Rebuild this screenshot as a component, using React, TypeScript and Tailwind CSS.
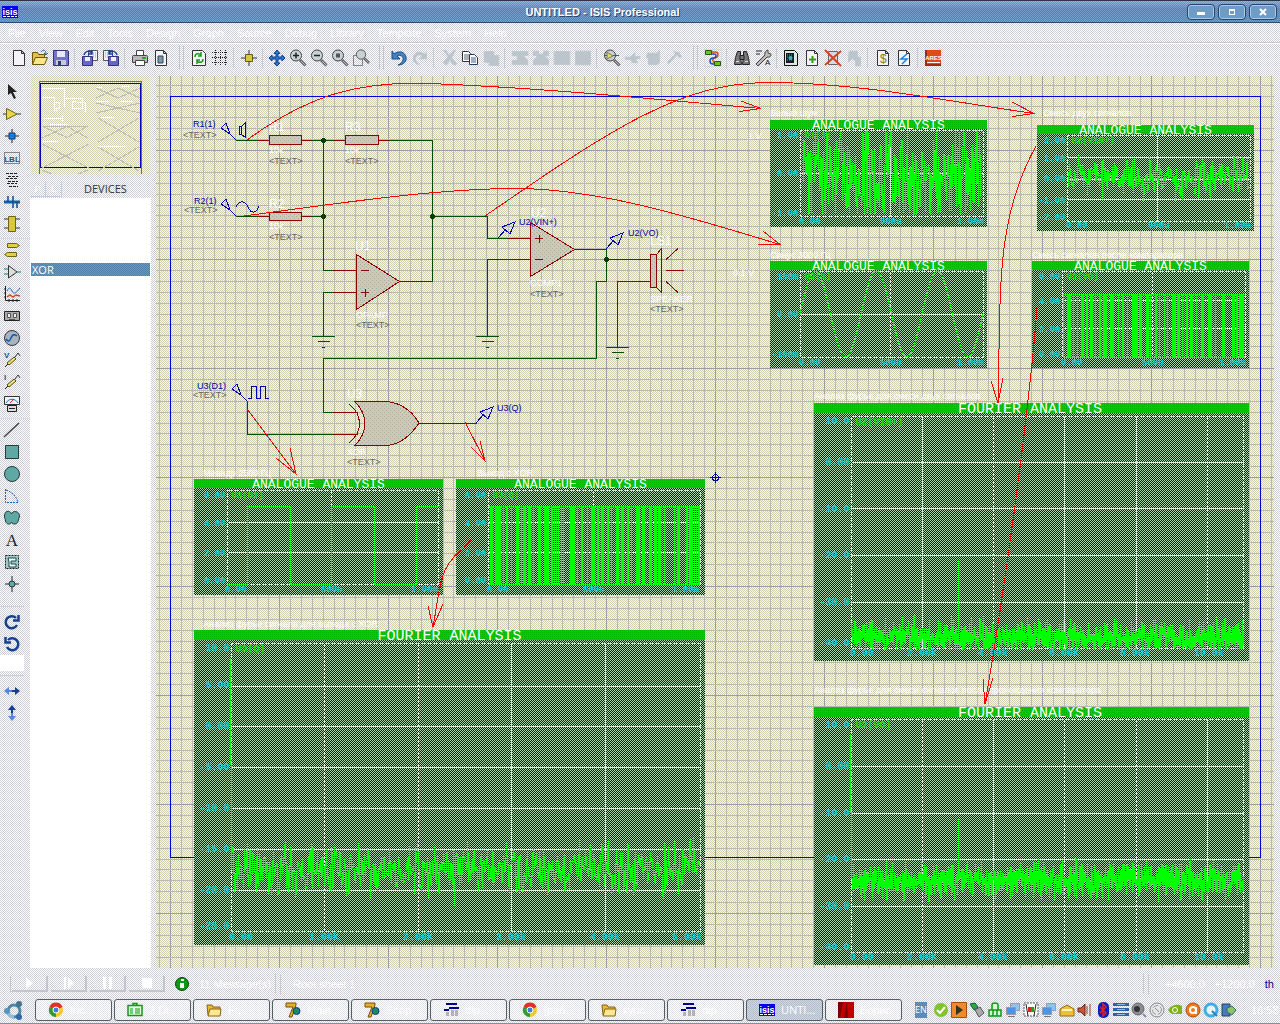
import React from "react";

const PANEL = "bg-[conic-gradient(#ffffff_25%,#cccdd6_0_50%,#ffffff_0_75%,#cccdd6_0)] bg-[size:2px_2px]";
const STEEL = "bg-[conic-gradient(#6699bb_25%,#5580aa_0_50%,#6699bb_0_75%,#4f7fb4_0)] bg-[size:2px_2px]";

/* ---------- toolbar icons, drawn on an 18x18 grid ---------- */

const page = (
  <path d="M3.5 1.5h8l3 3v12h-11z M11.500 1.500v3h3" fill="#f4f4f8" stroke="#333" />
);
const floppy = (
  <g>
    <path d="M1.500 1.500h14l1 1v14h-15z" fill="#7274c8" stroke="#33337a" />
    <path d="M5 2h8v6H5z" fill="#e8e8f4" />
    <path d="M4 11h10v5H4z" fill="#c8c8dc" />
    <path d="M6 12h3v4H6z" fill="#33337a" />
  </g>
);
const lens = (inner: React.ReactNode) => (
  <g>
    <path d="M11 11l5.500 5.500" stroke="#666" strokeWidth="3" />
    <path d="M12 12l4 4" stroke="#bbb" />
    <circle cx="7" cy="6.500" r="5.500" fill="#c9d2d2" stroke="#444" />
    {inner}
  </g>
);
const saveArrow = (
  <g>
    <path d="M7.500 1.500h9v10h-9z" fill="#f2f2f8" stroke="#555" />
    <path d="M12 4h3M12 6h3M12 8h3" stroke="#c88" strokeDasharray="1 1" />
    <path d="M1.500 7.500h10v9h-10z" fill="#6668c0" stroke="#33337a" />
    <path d="M4 8h5v4H4z" fill="#eef" />
    <path d="M3 6C4 2 8 1 11 4M11 1v4H7" fill="none" stroke="#12409a" strokeWidth="1.500" />
  </g>
);
const ghost = (d: string) => <path d={d} fill="#bcc4cc" stroke="#ccd8dc" strokeDasharray="1 1" />;

const glyphs: Record<string, React.ReactNode> = {
  New: page,
  Open: (
    <g>
      <path d="M1.500 15.500v-12h5l1 2h6v3" fill="#e3c04a" stroke="#6b5510" />
      <path d="M1.500 15.500l3-7h12l-3 7z" fill="#fbe789" stroke="#6b5510" />
      <path d="M10 3c2-3 5-2 5 2M13 4l2 2 2-2" fill="none" stroke="#2a5a8a" />
    </g>
  ),
  Save: floppy,
  "Import section": saveArrow,
  "Export section": <g transform="translate(18 0) scale(-1 1)">{saveArrow}</g>,
  Print: (
    <g>
      <path d="M5.500 7V1.500h7V7" fill="#fff" stroke="#444" />
      <path d="M1.500 7.500q0-1 1-1h13q1 0 1 1v6h-15z" fill="#b8b8b8" stroke="#444" />
      <path d="M4.500 11.500h9v5h-9z" fill="#fff" stroke="#444" />
      <path d="M11 8h4v2h-4z" fill="#1db21d" />
    </g>
  ),
  "Mark output area": (
    <g>
      {page}
      <path d="M6 7h5v7H6z" fill="#7c99a8" stroke="#345" />
    </g>
  ),
  Redraw: (
    <g>
      <path d="M2.500 1.500h10l3 3v12h-13z" fill="#f4f4f8" stroke="#333" />
      <path d="M5 8c0-4 4-4 6-2M11 3v4H8M13 10c0 4-4 4-6 2M7 15v-4h3" fill="none" stroke="#1b9a1b" strokeWidth="1.500" />
    </g>
  ),
  "Toggle grid": (
    <path
      d="M1 3.500h16M1 8.500h16M1 13.500h16M4.500 1v16M9.500 1v16M14.500 1v16"
      stroke="#222"
      strokeDasharray="1 1"
      shapeRendering="crispEdges"
    />
  ),
  Origin: (
    <g>
      <path d="M9 1v16M1 9h16" stroke="#333" />
      <path d="M5.500 5.500h7v7h-7z" fill="#d8c840" stroke="#665c10" />
    </g>
  ),
  Pan: (
    <path
      d="M9 1l3 3.500h-2V8h4V6l3 3-3 3v-2h-4v4h2L9 17l-3-3h2v-4H4v2L1 9l3-3v2h4V4.500H6z"
      fill="#2a7ad8"
      stroke="#0c3f8c"
    />
  ),
  "Zoom in": lens(<path d="M4 6.500h6M7 3.500v6" stroke="#222" strokeWidth="1.500" />),
  "Zoom out": lens(<path d="M4 6.500h6" stroke="#222" strokeWidth="1.500" />),
  "Zoom all": lens(<path d="M5 4.500h4v4H5z" fill="#555" />),
  "Zoom area": (
    <g>
      <path d="M1.500 6.500h9v10h-9z" fill="none" stroke="#222" strokeDasharray="1 1" />
      <g transform="translate(3 0) scale(.85)">{lens(null)}</g>
    </g>
  ),
  Undo: (
    <path d="M2 2v8h8L7 7c4-2 7 1 6 4-.5 2-2 4-5 5 6 0 9-4 8-8-1-5-7-7-12-3z" fill="#3f83c4" stroke="#1d4c85" />
  ),
  Redo: <g transform="translate(18 0) scale(-1 1)">{ghost("M2 2v8h8L7 7c4-2 7 1 6 4-.5 2-2 4-5 5 6 0 9-4 8-8-1-5-7-7-12-3z")}</g>,
  Cut: ghost("M3 1l5 7-5 5q2 5 5 2l2-4 2 4q4 3 5-1l-5-5 4-8h-2L9 6 6 1z"),
  Copy: (
    <g>
      <path d="M1.500 2.500h6l2 2v8h-8z" fill="#fff" stroke="#333" />
      <path d="M3 6h5M3 8h5M3 10h5" stroke="#567" />
      <path d="M8.500 5.500h5l3 3v7h-8z" fill="#fff" stroke="#223a66" />
      <path d="M10 9h5M10 11h5M10 13h5" stroke="#369" />
    </g>
  ),
  Paste: ghost("M2 2h10v4h5v11H7v-3H2z"),
  "Block copy": ghost("M1 2h16v5h-4l4 4v5H1v-5h5V7H1z"),
  "Block move": ghost("M1 2h6v3h4V2h6v5h-4l4 4v5H1v-4l4-5H1z"),
  "Block rotate": ghost("M1 2h16v14H1z"),
  "Block delete": ghost("M1 2h16v14H1z"),
  "Pick device": lens(
    <g>
      <path d="M4 3l6 4-6 3z" fill="#e8dc58" stroke="#776" />
      <path d="M1 6.500h3M10 6.500h6" stroke="#367" />
    </g>,
  ),
  "Make device": ghost("M1 8h5l5-5v4h5v3h-4l2 4H8l-1-3H1z"),
  "Packaging tool": ghost("M2 4h10l3-3v12l-3 3H3V9H1z"),
  Decompose: ghost("M7 2l6 1 3 5-3 1-2-3-8 9-2-2 8-8z"),
  "Wire autorouter": (
    <g fill="none">
      <path d="M.5 .5h17v17H.5z" stroke="#ccc" strokeDasharray="1 1" />
      <path d="M7 3h4q3 0 3 2.500T11 9t-2 3 3 3" stroke="#e24912" strokeWidth="1.500" />
      <path d="M7 5h3q2 0 2 2T9 9t-3 3 3 3h3" stroke="#1756c4" strokeWidth="1.500" />
      <path d="M1.500 1.500h6v4h-6zM10.500 12.500h6v4h-6z" fill="#69c21e" stroke="#2a5a0a" />
    </g>
  ),
  Search: (
    <g fill="#777" stroke="#222">
      <path d="M4.500 2.500h3v5l1 8h-7l1-7zM10.500 2.500h3l2 6 1 7h-7l1-8z" />
      <path d="M7 6.500h4v4H7z" />
      <path d="M3 12.500h3M12 12.500h3" stroke="#ddd" />
    </g>
  ),
  "Property tool": (
    <g>
      <path d="M2 2h6M2 5h4" stroke="#222" />
      <path d="M2 15l9-9q-1-4 3-5v3l3 1q0 4-4 3l-9 9z" fill="#bbb" stroke="#444" />
      <text x="11" y="16" className="font-['Liberation_Sans'] text-[8px]" fill="#111">A</text>
    </g>
  ),
  "Design explorer": (
    <g>
      <path d="M2.500 1.500h10l3 3v12h-13z" fill="#dfe9e4" stroke="#111" />
      <path d="M4 4h8v10H4z" fill="#122" />
      <path d="M5 6h6M5 8h6M5 11h6" stroke="#3b3" strokeDasharray="1 1" />
      <circle cx="8.500" cy="9" r="2" fill="#3bc" />
    </g>
  ),
  "New sheet": (
    <g>
      {page}
      <path d="M6 10.500h7M9.500 7v7" stroke="#3a9a14" strokeWidth="2" />
    </g>
  ),
  "Remove sheet": (
    <g>
      <path d="M4.500 2.500h9v13h-9z" fill="#cde" stroke="#666" />
      <path d="M1 1l16 16M17 2L1 16" stroke="#d8421c" strokeWidth="2" />
    </g>
  ),
  "Exit to parent": ghost("M4 2h9v6h3v9h-6v-5l-3-2-4 4V8z"),
  "Bill of materials": (
    <g>
      {page}
      <text x="6" y="14" className="font-['Liberation_Sans'] text-[12px]" fill="#888000">$</text>
    </g>
  ),
  "Electrical check": (
    <g>
      {page}
      <path d="M12 5L6 10h6l-5 5" fill="none" stroke="#1c82e0" strokeWidth="1.500" />
    </g>
  ),
  ARES: (
    <g>
      <path d="M1 1h16v16H1z" fill="#e04a18" />
      <path d="M1 15h16v2H1zM1 1h2v16H1z" fill="#a82808" />
      <path d="M3 13.500h13" stroke="#fff" />
      <text x="9.500" y="11" textAnchor="middle" className="font-['Liberation_Sans'] text-[6px] font-bold" fill="#fff">ARES</text>
    </g>
  ),

  /* mode column */
  Selection: <path d="M5 1v11l3-2 3 6 2-1-3-6h4z" fill="#222" />,
  Component: (
    <g>
      <path d="M0 9h4M14 9h4" stroke="#333" />
      <path d="M3.500 3.500L14 9 3.500 14.500z" fill="#e6d64a" stroke="#6b6414" />
    </g>
  ),
  Junction: (
    <g>
      <path d="M9 2v14M2 9h14" stroke="#223" />
      <path d="M6 6h6v6H6z" fill="#1a7bd8" stroke="#0a3c78" />
    </g>
  ),
  "Wire label": (
    <g>
      <path d="M1.500 3.500h15v11h-15z" fill="none" stroke="#222" strokeDasharray="1 1" />
      <text x="9" y="13" textAnchor="middle" className="font-['Liberation_Sans'] text-[8px] font-bold" fill="#0a5a9c">LBL</text>
    </g>
  ),
  "Text script": (
    <path
      d="M3 2.500h12M5 5.500h10M3 7.500h12M5 10.500h10M4 12.500h10M6 15.500h9"
      stroke="#222"
      strokeDasharray="3 1"
      shapeRendering="crispEdges"
    />
  ),
  Bus: (
    <g>
      <path d="M1 9h16" stroke="#0d62b0" strokeWidth="3" />
      <path d="M5 3v6M10 3v12M14 9v6" stroke="#0d4c88" strokeWidth="1.500" />
    </g>
  ),
  Subcircuit: (
    <g>
      <path d="M1 4h16M1 13h16" stroke="#333" />
      <path d="M5.500 1.500h7v15h-7z" fill="#d8c63c" stroke="#6b6414" />
    </g>
  ),
  Terminal: (
    <path d="M4.500 2.500h9l3 2-3 2h-9zM13.500 11.500h-9l-3 2 3 2h9z" fill="#e0d044" stroke="#6b6414" />
  ),
  "Device pin": (
    <g>
      <path d="M1 6h4M1 11h4M14 9h4" stroke="#087" />
      <path d="M5.500 2.500L14 9l-8.500 6z" fill="#ddd" stroke="#333" />
    </g>
  ),
  Graph: (
    <g fill="none">
      <path d="M2.500 1v14.500H17M1 4h2M1 8h2M1 12h2M6 14v3M10 14v3M14 14v3" stroke="#222" />
      <path d="M4 6c2-4 3-4 5 0s4 2 8-3" stroke="#1c6cc0" />
      <path d="M4 12l3-2 3 2 3-2 4 1" stroke="#d42" strokeWidth="1.500" />
    </g>
  ),
  Tape: (
    <g>
      <path d="M1.500 4.500h15v9h-15z" fill="#aaa" stroke="#222" />
      <path d="M4.500 6.500h3v4h-3zM10.500 6.500h3v4h-3z" fill="#eee" stroke="#555" />
      <path d="M6 12.500h6" stroke="#555" />
    </g>
  ),
  Generator: (
    <g>
      <circle cx="9" cy="9" r="7.500" fill="#a8b4bc" stroke="#334" />
      <path d="M3 10c3 4 4 1 5-1s2-5 6-2" fill="none" stroke="#0c54b0" strokeWidth="1.500" />
    </g>
  ),
  "Voltage probe": (
    <g>
      <text x="1" y="7" className="font-['Liberation_Sans'] text-[8px] font-bold" fill="#0a5a9c">V</text>
      <path d="M2 16l3-3M12 6l3-4 2 3" fill="none" stroke="#333" />
      <path d="M4 12l7-6 2 2-7 6z" fill="#ece07a" stroke="#554f10" />
    </g>
  ),
  "Current probe": (
    <g>
      <text x="1" y="7" className="font-['Liberation_Sans'] text-[8px] font-bold" fill="#0a5a9c">I</text>
      <path d="M2 16l3-3M12 6l3-4 2 3" fill="none" stroke="#333" />
      <path d="M4 12l7-6 2 2-7 6z" fill="#ece07a" stroke="#554f10" />
    </g>
  ),
  Instruments: (
    <g>
      <path d="M1.500 1.500h15v8h-15z" fill="#eef4f8" stroke="#333" />
      <path d="M3 8c3-5 9-5 12 0" fill="none" stroke="#1c6cc0" />
      <path d="M7 8l4-4" stroke="#d22" />
      <path d="M4.500 10.500h9v6h-9z" fill="#ddd" stroke="#222" />
      <path d="M6 13.500h6" stroke="#222" />
    </g>
  ),
  Line: <path d="M1 16L16 2" stroke="#444" strokeWidth="1.500" />,
  Box: <path d="M2.500 2.500h13v13h-13z" fill="#5fa8a4" stroke="#243c3c" />,
  Circle: <circle cx="9" cy="9" r="7.500" fill="#5fa8a4" stroke="#243c3c" />,
  Arc: (
    <path d="M2.500 2v13.500H16M3 3c6 2 10 6 12 12" fill="none" stroke="#1668b8" strokeDasharray="2 1" />
  ),
  Path: (
    <path d="M8.500 5c-1-4-7-4-7 2 0 3 1 3 1 5 1 4 5 4 6 1 1 3 6 3 7-2 0-2 1-2 1-4 0-5-7-6-8-2z" fill="#5fa8a4" stroke="#243c3c" />
  ),
  Text: (
    <text x="9" y="15" textAnchor="middle" className="font-['Liberation_Serif'] text-[17px]" fill="#222">A</text>
  ),
  Symbol: (
    <g>
      <path d="M2.500 2.500h13v13h-13z" fill="#9cc8c8" stroke="#222" strokeDasharray="2 1" />
      <path d="M5 5h8v3H8v3h5v3H6V9z" fill="#e8ffff" stroke="#244" />
    </g>
  ),
  Marker: (
    <g>
      <path d="M9 1v16M2 9h14" stroke="#223" />
      <circle cx="9" cy="9" r="3" fill="#5fa8a4" stroke="#243c3c" />
    </g>
  ),
  "Rotate clockwise": (
    <path d="M13 5a6 6 0 1 0 1 7M15.500 2v5.500H10" fill="none" stroke="#153f92" strokeWidth="2.500" />
  ),
  "Rotate anticlockwise": (
    <path d="M5 5a6 6 0 1 1-1 7M2.500 2v5.500H8" fill="none" stroke="#153f92" strokeWidth="2.500" />
  ),
  "Mirror horizontally": (
    <g>
      <path d="M9 8H6V5L1 9l5 4v-3h3z" fill="#5588dd" />
      <path d="M9 8h3V5l5 4-5 4v-3H9z" fill="#153f92" />
    </g>
  ),
  "Mirror vertically": (
    <g>
      <path d="M8 9V6H5l4-5 4 5h-3v3z" fill="#153f92" />
      <path d="M8 9v3H5l4 5 4-5h-3V9z" fill="#5588dd" />
    </g>
  ),
};

function Icon({ name }: { name: string }) {
  return (
    <svg width="18" height="18" viewBox="0 0 18 18" fill="none" aria-hidden="true">
      {glyphs[name]}
    </svg>
  );
}

const toolbar: string[][] = [
  ["New", "Open", "Save"],
  ["Import section", "Export section"],
  ["Print", "Mark output area"],
  ["Redraw", "Toggle grid"],
  ["Origin"],
  ["Pan", "Zoom in", "Zoom out", "Zoom all", "Zoom area"],
  ["Undo", "Redo"],
  ["Cut", "Copy", "Paste"],
  ["Block copy", "Block move", "Block rotate", "Block delete"],
  ["Pick device", "Make device", "Packaging tool", "Decompose"],
  ["Wire autorouter"],
  ["Search", "Property tool"],
  ["Design explorer", "New sheet", "Remove sheet", "Exit to parent"],
  ["Bill of materials", "Electrical check"],
  ["ARES"],
];
const barStarts = [3, 6, 10];

function IsisLogo() {
  return (
    <svg width="16" height="12" viewBox="0 0 16 12" className="shrink-0" role="img" aria-label="ISIS">
      <path d="M0 0h16v12H0z" fill="#0000ee" />
      <text x="8" y="9" textAnchor="middle" className="font-['Liberation_Sans'] text-[9px] font-bold" fill="#fff">isis</text>
      <path d="M1 10.500h14" stroke="#fff" strokeDasharray="3 1" />
    </svg>
  );
}

function TitleBar() {
  const btn =
    "flex h-4 w-7 items-center justify-center rounded-sm border border-[#23456e] bg-[#6f9cc6] shadow-[inset_0_0_0_1px_#a9cbe8]";
  return (
    <header className="flex h-[23px] items-center border-t border-b border-t-[#333344] border-b-[#2c4a6c] bg-[conic-gradient(#ffffff22_25%,#00224422_0_50%,#ffffff22_0_75%,#00224422_0),linear-gradient(#85add9,#6688bb_40%,#5b96c6)] bg-[size:2px_2px,auto] pr-[3px] pl-0.5">
      <IsisLogo />
      <h1 className="flex-1 text-center text-[11px] leading-4 font-bold text-white [text-shadow:1px_1px_0_#24466f]">
        UNTITLED - ISIS Professional
      </h1>
      <div className="flex gap-[3px]">
        <button aria-label="Minimize" className={btn}>
          <span className="mt-1 h-[3px] w-2 bg-white" />
        </button>
        <button aria-label="Maximize" className={btn}>
          <span className="h-1.5 w-1.5 border border-t-2 border-white" />
        </button>
        <button aria-label="Close" className={btn}>
          <svg width="8" height="8" viewBox="0 0 8 8">
            <path d="M1 1l6 6M7 1L1 7" stroke="#fff" strokeWidth="2" />
          </svg>
        </button>
      </div>
    </header>
  );
}

const menus = ["File", "View", "Edit", "Tools", "Design", "Graph", "Source", "Debug", "Library", "Template", "System", "Help"];

function MenuBar() {
  return (
    <nav className="flex h-5 items-center gap-[13px] border-b border-[#c9c9c9] pl-2">
      {menus.map((m) => (
        <button key={m} className="text-[11px] leading-4 text-white">
          {m}
        </button>
      ))}
    </nav>
  );
}

function Toolbar() {
  return (
    <div className="flex h-[33px] items-center border-t border-white pb-1 pl-2" role="toolbar" aria-label="Commands">
      {toolbar.map((group, i) => (
        <React.Fragment key={i}>
          {i > 0 &&
            (barStarts.includes(i) ? (
              <span className="mr-1 ml-2 h-6 w-[5px] border-x border-[#c4c6ce]" />
            ) : (
              <span className={i === 5 || i === 12 ? "mx-[3px] h-5 w-px bg-[#c8cad2]" : "mr-1 ml-[3px] h-5 w-px bg-[#c8cad2]"} />
            ))}
          {group.map((n) => (
            <button key={n} aria-label={n} className="flex w-[21px] justify-center">
              <Icon name={n} />
            </button>
          ))}
        </React.Fragment>
      ))}
    </div>
  );
}

const modes: string[][] = [
  ["Selection", "Component", "Junction", "Wire label", "Text script", "Bus", "Subcircuit"],
  ["Terminal", "Device pin", "Graph", "Tape", "Generator", "Voltage probe", "Current probe", "Instruments"],
  ["Line", "Box", "Circle", "Arc", "Path", "Text", "Symbol", "Marker"],
];

function ModeColumn() {
  const b = "flex h-[22px] w-6 items-center justify-center";
  return (
    <div className="flex w-[30px] shrink-0 flex-col gap-[3px] pt-[5px]" role="toolbar" aria-label="Modes" aria-orientation="vertical">
      {modes.map((g, i) => (
        <div key={i} className={i ? "flex flex-col border-t border-[#d8d8f4]" : "flex flex-col"}>
          {g.map((n) => (
            <button key={n} aria-label={n} className={b}>
              <Icon name={n} />
            </button>
          ))}
        </div>
      ))}
      <div className="mt-2 flex w-6 flex-col border-t border-[#cfcfe8] pt-1">
        <button aria-label="Rotate clockwise" className={b}><Icon name="Rotate clockwise" /></button>
        <button aria-label="Rotate anticlockwise" className={b}><Icon name="Rotate anticlockwise" /></button>
        <input aria-label="Angle" className="h-4 w-6 bg-white" />
        <span className="my-1 h-px bg-[#cccccc]" />
        <button aria-label="Mirror horizontally" className={b}><Icon name="Mirror horizontally" /></button>
        <button aria-label="Mirror vertically" className={b}><Icon name="Mirror vertically" /></button>
      </div>
    </div>
  );
}

/* ---------- dithered fills shared by the drawings ---------- */

function Fills() {
  return (
    <defs>
      <pattern id="paper" width="4" height="4" patternUnits="userSpaceOnUse">
        <path d="M0 0h4v4H0z" fill="#fbfbdc" />
        <path d="M0 0h1v1H0zM2 2h1v1H2zM1 1h1v1H1zM3 3h1v1H3z" fill="#d2d29c" />
        <path d="M2 0h1v1H2zM0 2h1v1H0zM3 1h1v1H3zM1 3h1v1H1z" fill="#cccccc" />
      </pattern>
      <pattern id="board" width="2" height="2" patternUnits="userSpaceOnUse">
        <path d="M0 0h2v2H0z" fill="#003000" />
        <path d="M0 0h1v1H0zM1 1h1v1H1z" fill="#aed0ae" />
      </pattern>
      <pattern id="banner" width="2" height="2" patternUnits="userSpaceOnUse">
        <path d="M0 0h2v2H0z" fill="#00cc00" />
        <path d="M0 0h1v1H0z" fill="#00b400" />
      </pattern>
      <pattern id="body" width="4" height="4" patternUnits="userSpaceOnUse">
        <path d="M0 0h4v4H0z" fill="#cccab4" />
        <path d="M0 0h1v1H0zM2 2h1v1H2z" fill="#aaa8aa" />
      </pattern>
    </defs>
  );
}

function Overview() {
  return (
    <svg className="h-[98px] w-full" viewBox="30 76 121 98" shapeRendering="crispEdges" fill="none" role="img" aria-label="Sheet overview">
      <path d="M31 76h119v98H31z" fill="url(#paper)" />
      <path d="M39.500 174V81.500h102V174" stroke="#00b400" />
      <path d="M40.500 83.500h100v84h-100z" stroke="#0000c0" />
      <g stroke="#bdbdb6">
        <path d="M96 88l22 10M96 98l22-10M118 88l22 10M118 98l22-10M96 103l44 10M96 113l44-10M42 126h46M42 126l26 12M42 138l26-12M66 126l22 12M66 138l22-12M42 144l47 24M42 168l47-24M98 118l41 24M98 142l41-24M98 147l41 24M98 171l41-24M42 170l10 4M88 170l-10 4" />
      </g>
      <path
        d="M42 88h22v20M42 97h12v13h4M54 102h5v6h-5zM66 98h16v10H72v-7h4M77 102h8v10M43 118h18M62 115v7M50 124h18M43 141h15M96 87h6M122 86h8M97 101h12M120 101h13M100 117h14M98 146h28"
        stroke="#fff"
      />
    </svg>
  );
}

function Devices() {
  return (
    <aside className="flex w-[121px] shrink-0 flex-col">
      <Overview />
      <div className="flex h-[23px] items-end">
        <button aria-label="Pick devices" className="h-4 w-4 border-r border-b border-[#bcd0e0] text-[9px] leading-4 text-white">P</button>
        <button aria-label="Device library" className="h-4 w-4 border-r border-b border-[#bcd0e0] text-[9px] leading-4 text-white">L</button>
        <h2 className="flex-1 pl-[22px] font-['Open_Sans'] text-[11px] leading-4 text-[#333]">DEVICES</h2>
      </div>
      <ul className="mt-px flex-1 bg-white pt-[65px]" aria-label="Device list">
        <li className={"mx-px h-[13px] pl-px font-['Open_Sans'] text-[11px] leading-[13px] text-white " + STEEL}>XOR</li>
      </ul>
    </aside>
  );
}

/* ---------- schematic ---------- */

function random(seed: number) {
  let s = seed;
  return () => {
    s = (s * 1664525 + 1013904223) % 4294967296;
    return s / 4294967296;
  };
}

function noise(x0: number, x1: number, mid: number, amp: number, seed: number, step = 0.5, low = 9999, high = 0) {
  const r = random(seed);
  const pts: string[] = [];
  for (let x = x0; x <= x1; x += step) {
    const spread = (r() + r() + r() - 1.5) / 1.5;
    pts.push(x.toFixed(1) + "," + Math.max(high, Math.min(low, mid + spread * amp)).toFixed(1));
  }
  return pts.join(" ");
}

type Tick = [string, number];
type GraphProps = {
  x: number; y: number; w: number; h: number;
  title: string; trace: string; fourier?: boolean;
  left: number; right: number; top: number; bottom: number;
  vLines: number[]; hLines: number[]; yTicks: Tick[]; xTicks: Tick[];
  children: React.ReactNode;
};

function GraphBox(p: GraphProps) {
  const head = p.fourier ? 10 : 9;
  const title = p.fourier ? "font-['Liberation_Mono'] text-[15px]" : "font-['Liberation_Mono'] text-[13px]";
  const tick = p.fourier ? "font-['Liberation_Mono'] text-[10px] font-bold" : "font-['Liberation_Mono'] text-[9px] font-bold";
  const titleX = p.fourier && p.w < 440 ? p.x + 216 : p.x + p.w / 2;
  return (
    <g>
      <rect x={p.x} y={p.y} width={p.w} height={p.h} fill="url(#board)" />
      <rect x={p.x} y={p.y} width={p.w} height={head} fill="url(#banner)" />
      <text x={titleX} y={p.y + (p.fourier ? 10 : 9)} textAnchor="middle" className={title} fill="#fff">{p.title}</text>
      <g stroke="#e4e8e4">
        <rect x={p.left} y={p.top} width={p.right - p.left} height={p.bottom - p.top} strokeDasharray="2 1" />
        {p.vLines.map((v) => <path key={v} d={`M${v} ${p.top}V${p.bottom}`} strokeDasharray="3 1" />)}
        {p.hLines.map((v) => <path key={v} d={`M${p.left} ${v}H${p.right}`} />)}
      </g>
      <g fill="#00ced6" className={tick}>
        {p.yTicks.map(([t, v]) => <text key={t} x={p.left - 2} y={v + 3} textAnchor="end">{t}</text>)}
        {p.xTicks.map(([t, v]) => <text key={t} x={v} y={p.y + p.h - (p.fourier ? 5 : 3)}>{t}</text>)}
      </g>
      <text x={p.left + 4} y={p.top + (p.fourier ? 8 : 7)} className={tick} fill="#00e000">{p.trace}</text>
      <g stroke="#00ff00">{p.children}</g>
    </g>
  );
}

function bars(list: number[], origin: number, scale: number, top: number, bottom: number) {
  const out: React.ReactNode[] = [];
  for (let i = 0; i < list.length; i += 2) {
    const w = Math.max(1, Math.round(list[i + 1] / scale));
    out.push(
      <rect key={i} x={Math.round(origin + list[i] / scale)} y={top} width={w} height={bottom - top} fill="#00ff00" stroke="none" />,
    );
  }
  return out;
}

const comparatorBars = [
  937, 4, 950, 12, 966, 4, 980, 4, 990, 8, 1005, 5, 1015, 10, 1030, 4, 1042, 6, 1054, 12, 1074, 12, 1098, 4, 1110, 6, 1124, 4,
  1138, 16, 1160, 8, 1178, 8, 1192, 2, 1205, 6, 1216, 4, 1230, 4, 1240, 4, 1254, 12, 1270, 8, 1284, 2, 1296, 6, 1308, 10, 1324, 4,
  1340, 10, 1360, 12, 1380, 2, 1400, 10, 1430, 8, 1440, 6, 1450, 12, 1462, 2,
];
const xorBars = [
  150, 8, 166, 18, 190, 4, 198, 5, 212, 2, 228, 8, 243, 3, 250, 8, 264, 10, 280, 4, 293, 10, 312, 14, 333, 5, 341, 3, 348, 4, 355, 3,
  362, 2, 370, 2, 390, 16, 410, 4, 424, 5, 440, 4, 452, 12, 471, 6, 484, 10, 502, 6, 514, 2, 528, 10, 544, 8, 560, 6, 574, 2,
  587, 12, 606, 8, 628, 8, 642, 8, 655, 10, 672, 2, 702, 3, 712, 8, 738, 6, 746, 12, 762, 3, 768, 3, 775, 6,
];

function sine() {
  const pts: string[] = [];
  for (let x = 800; x <= 983; x++) pts.push(`${x},${(314 - 43 * Math.sin(((x - 800) / 61) * 2 * Math.PI)).toFixed(1)}`);
  return pts.join(" ");
}

const columns = Array.from({ length: 103 }, (_, i) => i - 51);
const rows = Array.from({ length: 83 }, (_, i) => i - 37);

function Grid() {
  return (
    <g>
      {columns.map((k) => (
        <rect key={"c" + k} x={Math.round(715 + k * 10.9)} y="76" width="1" height="892" fill={k % 10 ? "#b8b8b6" : "#9c9ca4"} />
      ))}
      {rows.map((k) => (
        <rect key={"r" + k} x="156" y={Math.round(477 + k * 10.9)} width="1118" height="1" fill={k % 10 ? "#b8b8b6" : "#9c9ca4"} />
      ))}
    </g>
  );
}

const ground = (x: number, y: number) => `M${x - 11} ${y}h23M${x - 5} ${y + 5}h12M${x - 1} ${y + 11}h3`;
const source = (x: number, y: number) => `M${x} ${y}l-6-6M${x - 10} ${y - 17}l-5 5 9 6z`;
const probe = (x: number, y: number) => `M${x} ${y}l8-9M${x + 4} ${y - 11}l13-5-5 12z`;

const small = "font-['Liberation_Sans'] text-[9px]";
const captions: [string, number, number][] = [
  ["Белый шум", 770, 116],
  ["Смесь двух сигналов", 1043, 116],
  ["Синус 3000 Гц", 770, 258],
  ["Смесь сигналов после компаратора", 1032, 258],
  ["Анализ фурье для смеси двух сигналов", 814, 399],
  ["Меандр 2500 Гц", 203, 476],
  ["Выход с XOR", 477, 476],
  ["Анализ фурье сигнала для выхода с XOR", 203, 627],
  ["Анализ фурье для смеси сигналов после прохождения компаратора", 814, 693],
];
const refs: [string, number, number][] = [
  ["R1", 269, 131], ["R3", 345, 131], ["R2", 269, 208], ["U1", 355, 250], ["U2", 531, 217], ["LS1", 650, 245], ["U3", 347, 398],
];
const values: [string, number, number][] = [
  ["10k", 269, 153], ["10k", 345, 153], ["10k", 269, 229], ["OPAMP", 356, 318], ["COMP1", 530, 286], ["SPEAKER", 650, 302],
  ["XOR", 347, 455], ["1 V", 748, 139], ["0.1 V", 733, 276],
];
const placeholders: [number, number][] = [
  [183, 138], [269, 164], [345, 164], [184, 213], [269, 240], [356, 328], [530, 297], [650, 312], [193, 398], [347, 465],
];
const probes: [string, number, number][] = [
  ["R1(1)", 193, 127], ["R2(1)", 194, 204], ["U2(VIN+)", 519, 225], ["U2(VO)", 628, 236], ["U3(D1)", 197, 389], ["U3(Q)", 497, 411],
];

function Schematic() {
  return (
    <svg className="h-full w-full" shapeRendering="crispEdges" fill="none" role="img" aria-label="Schematic sheet">
      <Fills />
      <g transform="translate(-156 -76)">
        <rect x="156" y="76" width="1118" height="892" fill="url(#paper)" />
        <Grid />
        <path d="M170 96h1091v762H170zM171 97v760h1089V97z" fill="#0000d8" fillRule="evenodd" />

        {/* wires */}
        <path
          d={
            "M236 140.500h22M311 140.500h34M389 140.500h43.500V281.500H421M323.500 140.500V270.500h10M236 216.500h22M311 216.500h12M432.500 216.500h55V238.500h21M508 259.500h-21V336M323.500 336V292.500h10M590 249.500h16.500V281.500h-10V358.500H323.500V412.500h10M606 259.500h34M640 281.500h-22.500V347M247.500 401V434.500h86M440 423.500h37" +
            ground(323, 336.5) + ground(487, 336.5) + ground(617, 347.5)
          }
          stroke="#005000"
        />
        <g fill="#004000">
          <circle cx="323.500" cy="140.500" r="2.500" />
          <circle cx="323.500" cy="216.500" r="2.500" />
          <circle cx="432.500" cy="216.500" r="2.500" />
          <circle cx="606.500" cy="259.500" r="2.500" />
        </g>

        {/* parts */}
        <g stroke="#900000">
          <path d="M258 140.500h11M301 140.500h10M334 140.500h11M378 140.500h11M258 216.500h11M301 216.500h10M333 270.500h23M333 292.500h23M400 281.500h21M508 238.500h22M508 259.500h22M574 249.500h16M640 259.500h10M640 281.500h10M333 412.500h25M333 434.500h25M419 423.500h21M666 259.500l12-11M666 270.500h18M666 281.500l12 11" />
          <g fill="url(#body)">
            <path d="M269.500 135.500h32v9h-32zM345.500 135.500h33v9h-33zM269.500 212.500h32v8h-32z" />
            <path d="M356.500 254.500v55l43-28zM530.500 222.500v54l44-27z" />
            <path d="M650.500 254.500h6v33h-6z" />
            <path d="M656.500 254.500l5-6v44l-5-5z" fill="none" />
            <path d="M355 401.500H387Q408 404 419 423Q405 444 387 445.500H355C368 432 368 415 355 401.500z" />
          </g>
          <path d="M349 404C363 415 363 432 349 443M361 270.500h8M361 292.500h8M365.500 289v8M535 238.500h8M539.500 235v8M535 259.500h8" />
        </g>

        {/* probes and generators */}
        <g stroke="#0000b4">
          <path d={source(236, 140) + source(236, 216) + source(247, 401)} />
          <path d="M239.500 126.500h2v8h-2zM241.500 126.500l4-4v15l-4-3" />
          <path d="M236 207c3-7 9-7 12 0s8 7 11-1" />
          <path d="M248 398.500h3V386.500h5v12h4V386.500h5v12h4" />
          <path d={probe(498, 238) + probe(606, 249) + probe(476, 423)} />
          <circle cx="715.500" cy="477.500" r="3" />
          <path d="M710 477.500h11M715.500 472v11" />
        </g>

        {/* labels */}
        <g className={small}>
          <g fill="#0000b4">{probes.map(([t, x, y]) => <text key={t} x={x} y={y}>{t}</text>)}</g>
          <g fill="#666">{placeholders.map(([x, y]) => <text key={x + "-" + y} x={x} y={y}>&lt;TEXT&gt;</text>)}</g>
          <g fill="#fff">
            {values.map(([t, x, y]) => <text key={t + x + y} x={x} y={y}>{t}</text>)}
            {captions.map(([t, x, y]) => <text key={t} x={x} y={y}>{t}</text>)}
          </g>
        </g>
        <g fill="#fff" className="font-['Liberation_Sans'] text-[12px]">
          {refs.map(([t, x, y]) => <text key={t} x={x} y={y}>{t}</text>)}
        </g>

        {/* graphs */}
        <GraphBox x={770} y={120} w={217} h={107} title="ANALOGUE ANALYSIS" trace="R1(1)" left={800.5} right={983.5} top={130.5} bottom={216.5}
          vLines={[890.5]} hLines={[173.5]} yTicks={[["1.00", 135], ["0.00", 173], ["-1.00", 213]]} xTicks={[["0.00", 799], ["500u", 880], ["1.00m", 957]]}>
          <polyline points={noise(803, 981, 173, 82, 11, 0.6, 214, 131)} />
        </GraphBox>
        <GraphBox x={1037} y={125} w={217} h={106} title="ANALOGUE ANALYSIS" trace="U2(VIN+)" left={1067.5} right={1250.5} top={135.5} bottom={221.5}
          vLines={[1157.5]} hLines={[157.5, 179.5, 199.5]} yTicks={[["2.00", 140], ["1.00", 158], ["0.00", 178], ["-1.00", 200], ["-2.00", 217]]} xTicks={[["0.00", 1066], ["500u", 1148], ["1.00m", 1224]]}>
          <polyline points={noise(1068, 1249, 178, 31, 5, 0.7)} />
        </GraphBox>
        <GraphBox x={770} y={261} w={217} h={107} title="ANALOGUE ANALYSIS" trace="R2(1)" left={800.5} right={983.5} top={271.5} bottom={357.5}
          vLines={[890.5]} hLines={[314.5]} yTicks={[["100m", 276], ["0.00", 314], ["-100m", 354]]} xTicks={[["0.00", 799], ["500u", 880], ["1.00m", 957]]}>
          <polyline points={sine()} />
        </GraphBox>
        <GraphBox x={1032} y={261} w={217} h={107} title="ANALOGUE ANALYSIS" trace="U2(VO)" left={1062.5} right={1245.5} top={271.5} bottom={357.5}
          vLines={[1152.5]} hLines={[300.5, 328.5]} yTicks={[["6.00", 276], ["4.00", 301], ["2.00", 329], ["0.00", 354]]} xTicks={[["0.00", 1061], ["500u", 1142], ["1.00m", 1219]]}>
          {bars(comparatorBars, 740, 2.904, 294, 358)}
          <path d="M1063 294.500h182M1063 357.500h182" />
        </GraphBox>
        <GraphBox fourier x={814} y={403} w={435} h={258} title="FOURIER ANALYSIS" trace="U2(VIN+)" left={851.5} right={1243.5} top={416.5} bottom={648.5}
          vLines={[922.5, 993.5, 1064.5, 1136.5, 1207.5]} hLines={[462.5, 508.5, 555.5, 602.5]}
          yTicks={[["10.0", 421], ["0.00", 462], ["-10.0", 509], ["-20.0", 555], ["-30.0", 602], ["-40.0", 643]]}
          xTicks={[["0.00", 850], ["2.00k", 907], ["4.00k", 978], ["6.00k", 1049], ["8.00k", 1120], ["10.0k", 1194]]}>
          <polyline points={noise(851, 1244, 637, 24, 21, 0.3, 649)} />
          <path d="M958.500 560V640" />
        </GraphBox>
        <GraphBox fourier x={814} y={707} w={435} h={258} title="FOURIER ANALYSIS" trace="U2(VO)" left={851.5} right={1243.5} top={719.5} bottom={952.5}
          vLines={[922.5, 993.5, 1064.5, 1136.5, 1207.5]} hLines={[766.5, 813.5, 859.5, 906.5]}
          yTicks={[["10.0", 725], ["0.00", 766], ["-10.0", 813], ["-20.0", 859], ["-30.0", 906], ["-40.0", 947]]}
          xTicks={[["0.00", 850], ["2.00k", 907], ["4.00k", 978], ["6.00k", 1049], ["8.00k", 1120], ["10.0k", 1194]]}>
          <polyline points={noise(851, 1244, 880, 25, 77, 0.3)} />
          <path d="M850.500 734V812M851.500 812V876M958.500 818V880" />
        </GraphBox>
        <GraphBox x={194} y={479} w={249} h={116} title="ANALOGUE ANALYSIS" trace="U3(D1)" left={227.5} right={438.5} top={490.5} bottom={584.5}
          vLines={[331.5]} hLines={[522.5, 552.5]} yTicks={[["6.00", 495], ["4.00", 523], ["2.00", 553], ["0.00", 580]]} xTicks={[["0.00", 225], ["500u", 321], ["1.00m", 411]]}>
          <path d="M227 584.500h20.500V506.500h43V584.500h41V506.500h43V584.500h42V506.500h22" />
        </GraphBox>
        <GraphBox x={456} y={479} w={249} h={116} title="ANALOGUE ANALYSIS" trace="U3(Q)" left={488.5} right={700.5} top={490.5} bottom={584.5}
          vLines={[593.5]} hLines={[522.5, 552.5]} yTicks={[["6.00", 495], ["4.00", 523], ["2.00", 553], ["0.00", 580]]} xTicks={[["0.00", 487], ["500u", 583], ["1.00m", 672]]}>
          {bars(xorBars, 440, 3, 506, 585)}
          <path d="M489 506.500h211M489 584.500h211" />
        </GraphBox>
        <GraphBox fourier x={194} y={630} w={511} h={315} title="FOURIER ANALYSIS" trace="U3(Q)" left={231.5} right={700.5} top={643.5} bottom={931.5}
          vLines={[324.5, 418.5, 511.5, 605.5]} hLines={[686.5, 726.5, 767.5, 808.5, 849.5, 890.5]}
          yTicks={[["10.0", 648], ["5.00", 685], ["0.00", 726], ["-5.00", 767], ["-10.0", 808], ["-15.0", 849], ["-20.0", 890], ["-25.0", 926]]}
          xTicks={[["0.00", 229], ["1.00k", 309], ["2.00k", 403], ["3.00k", 496], ["4.00k", 590], ["5.00k", 672]]}>
          <polyline points={noise(232, 700, 869, 40, 42, 0.9)} />
          <path d="M230.500 659V765M231.500 765V870" />
        </GraphBox>

        {/* callout arrows */}
        <g stroke="#ff0000">
          <path d="M247 140C310 94 360 81 430 83.500C540 88 620 96 761 108.500M741 101l20 7.500-22 3" />
          <path d="M485 216C610 130 680 82 770 82.500C860 83 940 100 1034 113.500M1012 102l22 11.500-22 3" />
          <path d="M244 216C340 203 440 188 520 188.500C600 190 680 214 780 244.500M763 231l17 13.500h-22" />
          <path d="M1036 146C995 220 1001 290 998 403M991 381l7 22 5-25" />
          <path d="M1037 308C1030 400 1008 570 985 704M983 679l2 25 8-26" />
          <path d="M247 409l49 65M290 448l6 26-20-16" />
          <path d="M465 422l20 39M480 441l5 20-14-14" />
          <path d="M471 540C436 570 442 580 433 627M428 606l5 21 10-23" />
        </g>
      </g>
    </svg>
  );
}

/* ---------- bottom bars ---------- */

const sim: [string, string][] = [
  ["Play", "M3 0l7 6-7 6z"],
  ["Step", "M2 0h2v12H2zM6 0l6 6-6 6z"],
  ["Pause", "M2 0h3v12H2zM8 0h3v12H8z"],
  ["Stop", "M2 1h10v10H2z"],
];

function StatusBar() {
  return (
    <div className="flex h-[30px] items-center pt-0.5 pr-1.5 pl-2.5 text-[11px] leading-4 text-white">
      <div className="flex gap-[3px] border-l border-[#c4c6ce] pl-px">
        {sim.map(([n, d]) => (
          <button key={n} aria-label={n} className="flex h-4 w-9 items-center justify-center border-r-2 border-b-2 border-[#c2c6cc]">
            <svg width="13" height="12" viewBox="0 0 13 12"><path d={d} fill="#fff" /></svg>
          </button>
        ))}
      </div>
      <svg width="14" height="14" viewBox="0 0 14 14" className="ml-2.5 shrink-0" role="img" aria-label="Information">
        <circle cx="7" cy="7" r="6.500" fill="#0a9a14" stroke="#064a08" />
        <path d="M6 2h3v2H6zM5 6h4v5H5z" fill="#fff" />
      </svg>
      <span className="ml-2.5 w-[68px] whitespace-nowrap">11 Message(s)</span>
      <span className="mx-2 h-5 w-1.5 border-x border-[#c8cad2]" />
      <span className="flex-1 pl-1">Root sheet 1</span>
      <span className="mr-4 h-5 w-1.5 border-x border-[#c8cad2]" />
      <span className="w-[50px]">+4600.0</span>
      <span className="w-[50px]">+1200.0</span>
      <span className="text-[#000080]">th</span>
    </div>
  );
}

const taskIcons: Record<string, React.ReactNode> = {
  chrome: (
    <g>
      <circle cx="8" cy="8" r="7" fill="#f5c92a" />
      <path d="M8 8L1.500 5A7 7 0 0 1 14.500 5z" fill="#de3226" />
      <path d="M8 8L1.500 5A7 7 0 0 0 8 15z" fill="#2f9c3c" />
      <circle cx="8" cy="8" r="3" fill="#3f7fd8" stroke="#fff" />
    </g>
  ),
  card: (
    <g fill="none" stroke="#0a9a14">
      <path d="M1 3.500h14v10H1zM6 1.500h4v2H6z" fill="#e4fbe4" strokeWidth="1.500" />
      <path d="M3 7h3M3 9h3M3 11h3M8 7h5M8 9h5M8 11h5" />
    </g>
  ),
  folder: (
    <g>
      <path d="M1 3h5l1 2h7v8H2z" fill="#e5b93a" stroke="#8a6510" />
      <path d="M4 7h11l-1 7H2z" fill="#fbe891" stroke="#8a6510" />
    </g>
  ),
  seven: (
    <g>
      <path d="M1 1h10v2L7 15H4L8 5H1z" fill="#e2b02a" stroke="#7a4c08" />
      <circle cx="11.500" cy="9" r="3.500" fill="#1b8a6a" stroke="#123a80" />
    </g>
  ),
  scheme: (
    <g>
      <path d="M3 1h11v2H3zM6 5h10v2H6zM1 7h5v2H1z" fill="#000090" />
      <path d="M3 11h3M3 13h3M8 9h3M8 11h3M8 13h3M12 9h3M12 11h3M12 13h3" stroke="#777" />
    </g>
  ),
  red: (
    <g>
      <path d="M0 0h16v16H0z" fill="#c00000" />
      <path d="M0 0h5L2 16H0zM9 0l-3 16h4z" fill="#7a0000" />
    </g>
  ),
};
const tasks: [string, string][] = [
  ["chrome", "Inc..."], ["card", "2 Di..."], ["folder", "F:..."], ["seven", "Main..."], ["seven", "Scop"], ["scheme", "dip..."],
  ["chrome", "[раб..."], ["folder", "курс..."], ["scheme", "dip..."], ["isis", "UNTI..."], ["red", "Борис"],
];

const network = (
  <g>
    <path d="M5.500 1.500h9v7h-9z" fill="#8ec4f0" stroke="#99a" />
    <path d="M1.500 5.500h9v7h-9z" fill="#4f94e0" stroke="#99a" />
    <path d="M3 14.500h7" stroke="#777" />
  </g>
);

const tray: [string, React.ReactNode][] = [
  ["Skype", <g><circle cx="8" cy="8" r="7" fill="#7fc42a" /><path d="M4 8l3 3 5-6" stroke="#fff" strokeWidth="2" fill="none" /></g>],
  ["Player", <g><path d="M.5 .5h15v15H.5z" fill="#f08a2a" stroke="#a85008" /><path d="M5 3l7 5-7 5z" fill="#332" /></g>],
  ["Device", <g><path d="M1 2l5-1 3 4-4 3z" fill="#2fa83a" stroke="#064" /><path d="M6 8l5-3 4 6-5 4z" fill="#aaa" stroke="#555" /></g>],
  ["Lock", <g fill="#d8f8d8" stroke="#0a9a14" strokeWidth="1.500"><path d="M5 8V3q0-2 3-2t3 2v5zM2 8h12v6H2zM6 8v6M10 8v6" /></g>],
  ["Network 1", network],
  ["Monitor", <g><path d="M1 1h14v13H1z" fill="#fff" stroke="#555" strokeDasharray="2 1" /><path d="M3 2l2 12M13 2l-2 12" stroke="#222" /><path d="M5 5h3v5H5z" fill="#d22" /><path d="M8 5h3v5H8z" fill="#1a1" /></g>],
  ["Network 2", network],
  ["Mail", <g><path d="M1 7l7-4 7 4v7H1z" fill="#eebf3a" stroke="#96690c" /><path d="M3 8h10" stroke="#fff6c0" strokeWidth="2" /></g>],
  ["Volume", <g><path d="M1 6h3l4-4v12l-4-4H1z" fill="#c8563a" stroke="#6b2210" /><path d="M10 4v8M13 2v12" stroke="#a43a20" /></g>],
  ["Bluetooth", <g><rect x="3" y="0" width="11" height="16" rx="5" fill="#0a1fc0" /><path d="M5 5l6 6-3 3V2l3 3-6 6" fill="none" stroke="#e02020" strokeWidth="1.500" /></g>],
  ["Levels", <g><path d="M0 2.500h16M0 7.500h16M0 12.500h16" stroke="#2f63a8" strokeWidth="3" /><path d="M4 2.500h8M4 7.500h8M4 12.500h8" stroke="#8fb8e0" /></g>],
  ["Speaker", <g><circle cx="7" cy="7" r="6" fill="#8a8e94" stroke="#666" /><circle cx="6" cy="7" r="3" fill="#333" /><path d="M12 12l3 3" stroke="#88a" strokeWidth="2" /></g>],
  ["Sync", <g><circle cx="8" cy="8" r="7" fill="#e4e6e8" stroke="#888" /><circle cx="8" cy="8" r="4.500" fill="none" stroke="#999" strokeDasharray="6 2" /><path d="M6 6l4 4" stroke="#888" /></g>],
  ["Nvidia", <g><path d="M1 8c4-6 10-6 14-4v8H6C4 12 2 10 1 8z" fill="#7eb41a" /><circle cx="8" cy="8" r="2.500" fill="none" stroke="#fff" /></g>],
  ["Avast", <g><circle cx="8" cy="8" r="7" fill="#f07a18" stroke="#b44a06" /><circle cx="8" cy="8" r="3" fill="none" stroke="#fff" strokeWidth="2" /><path d="M11 5v7" stroke="#fff" strokeWidth="2" /></g>],
  ["QuickTime", <g><circle cx="8" cy="8" r="6" fill="#e8f6fc" stroke="#3ab0e4" strokeWidth="3" /><path d="M9 9l5 5" stroke="#2a80c0" strokeWidth="2" /></g>],
  ["Remove hardware", <g><path d="M1 2h8v12H1z" fill="#4a78c0" stroke="#245" /><path d="M6 6l5-2 4 4-4 5-5-3z" fill="#8ac46a" stroke="#367" /></g>],
];

function TaskBar() {
  return (
    <footer className="flex h-[26px] items-start border-b border-[#8c8c94] pt-px pl-1 text-[11px] leading-4 text-white">
      <button aria-label="Start" className="mr-3 h-[22px] w-[19px] shrink-0">
        <svg width="19" height="20" viewBox="0 0 19 20" fill="none">
          <circle cx="10" cy="11" r="6" stroke="#4f86a8" strokeWidth="3" />
          <path d="M4 11a6 6 0 0 0 6 6" stroke="#8fc0dc" strokeWidth="3" />
          <circle cx="15" cy="4" r="3" fill="#3f7590" />
          <circle cx="3" cy="11" r="3" fill="#5a94bc" />
          <circle cx="15" cy="17" r="3" fill="#2f6aa8" />
        </svg>
      </button>
      <div className="flex flex-1 gap-0.5">
        {tasks.map(([icon, label], i) => (
          <button
            key={i}
            className={
              "flex h-[22px] max-w-[77px] flex-1 items-center gap-1.5 overflow-hidden rounded-[3px] border border-[#556066] pl-3 whitespace-nowrap " +
              (icon === "isis" ? "bg-[#a0b0c488] font-['Open_Sans']" : "bg-[#ffffff66]")
            }
          >
            {icon === "isis" ? (
              <IsisLogo />
            ) : (
              <svg width="16" height="16" viewBox="0 0 16 16" className="shrink-0">{taskIcons[icon]}</svg>
            )}
            {label}
          </button>
        ))}
      </div>
      <div className="flex h-[22px] items-center gap-0.5">
        <span className={"mr-1 h-4 w-3 overflow-hidden font-['Open_Sans'] text-[9px] " + STEEL}>EN</span>
        {tray.map(([n, g]) => (
          <svg key={n} width="16" height="16" viewBox="0 0 16 16" role="img" aria-label={n}>{g}</svg>
        ))}
        <time className="w-[41px] pl-3">16:58</time>
      </div>
    </footer>
  );
}

export default function App() {
  return (
    <div className={"flex min-h-screen flex-col font-['Liberation_Sans',sans-serif] " + PANEL}>
      <TitleBar />
      <MenuBar />
      <Toolbar />
      <main className="flex flex-1">
        <ModeColumn />
        <Devices />
        <div className="mr-1.5 ml-[5px] min-w-0 flex-1">
          <Schematic />
        </div>
      </main>
      <StatusBar />
      <TaskBar />
    </div>
  );
}
